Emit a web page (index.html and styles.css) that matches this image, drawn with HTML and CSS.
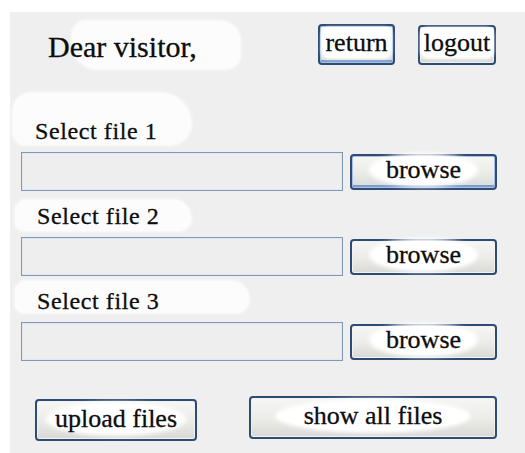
FILE: index.html
```html
<!DOCTYPE html>
<html lang="en">
<head>
<meta charset="utf-8">
<title>Upload files</title>
<link rel="stylesheet" href="styles.css">
</head>
<body>
<div class="panel">
  <div class="header">
    <div class="greeting">Dear visitor,</div>
    <button class="btn btn-return focused"><span class="ink">return</span></button>
    <button class="btn btn-logout"><span class="ink">logout</span></button>
  </div>

  <div class="label label-1">Select file 1</div>
  <div class="file-row">
    <div class="field"></div>
    <button class="btn btn-browse focused"><span class="ink">browse</span></button>
  </div>

  <div class="label label-2">Select file 2</div>
  <div class="file-row">
    <div class="field"></div>
    <button class="btn btn-browse"><span class="ink">browse</span></button>
  </div>

  <div class="label label-3">Select file 3</div>
  <div class="file-row">
    <div class="field"></div>
    <button class="btn btn-browse"><span class="ink">browse</span></button>
  </div>

  <div class="actions">
    <button class="btn btn-upload"><span class="ink">upload files</span></button>
    <button class="btn btn-show"><span class="ink">show all files</span></button>
  </div>
</div>
</body>
</html>
```

FILE: styles.css
```css
html, body {
  margin: 0;
  padding: 0;
  background: #ffffff;
}

body {
  font-family: "Liberation Serif", "Times New Roman", serif;
  color: #0d0d0d;
  -webkit-text-stroke: 0.3px #0d0d0d;
}

.panel {
  position: relative;
  isolation: isolate;
  box-sizing: border-box;
  width: 515px;
  height: 441px;
  margin: 12px 0 0 10px;
  padding: 12px 28px 0 11px;
  background: #efefef;
}

/* top bar */
.header {
  display: flex;
  align-items: center;
  height: 41px;
}

.greeting {
  position: relative;
  flex: 1;
  margin-left: 27px;
  margin-top: 4px;
  font-size: 30px;
  line-height: 34px;
}

.greeting::before {
  content: "";
  position: absolute;
  z-index: -1;
  left: 24px;
  top: -9px;
  width: 168px;
  height: 48px;
  background: #fcfcfc;
  border-radius: 14px 20px 14px 26px;
  box-shadow: 0 0 3px 1px #fcfcfc;
}

/* buttons */
.btn {
  display: flex;
  align-items: center;
  justify-content: center;
  box-sizing: border-box;
  padding: 0 0 3px;
  margin: 0;
  font-family: inherit;
  font-size: 26px;
  color: #0d0d0d;
  border: 2px solid #2e4b73;
  border-radius: 4px;
  background: linear-gradient(180deg, #f6f6f4 0%, #ebebe8 55%, #d8d8d4 100%);
  box-shadow: inset 0 0 0 1px #f2f2f2;
}

.btn.focused {
  box-shadow: inset 0 0 0 1px #a9c0e4, inset 0 -2px 0 1px #7d9dd2;
}

.ink {
  display: inline-block;
  line-height: 28px;
  padding: 0 9px;
  background: #ffffff;
  border-radius: 50%;
  box-shadow: 0 0 4px 3px #ffffff;
}

.btn-return {
  width: 77px;
  height: 41px;
  margin-right: 23px;
}

.btn-return .ink,
.btn-logout .ink {
  padding: 0 2px;
  border-radius: 6px;
  box-shadow: 0 0 3px 2px #ffffff;
}

.btn-logout {
  width: 78px;
  height: 40px;
  margin-right: 1px;
}

/* file pickers */
.label {
  position: relative;
  font-size: 24px;
  line-height: 28px;
  letter-spacing: 0.6px;
  margin-top: 11px;
  margin-bottom: 7px;
  padding-left: 16px;
}

.label::before {
  content: "";
  position: absolute;
  z-index: -1;
  left: -6px;
  top: -2px;
  width: 176px;
  height: 31px;
  background: #fcfcfc;
  border-radius: 16px 26px 18px 14px;
  box-shadow: 0 0 3px 1px #fcfcfc;
}

.label-1 {
  margin-top: 52px;
  padding-left: 14px;
}

.label-1::before {
  left: -8px;
  top: -24px;
  height: 52px;
  width: 178px;
  border-radius: 24px 40px 28px 16px;
}

.label-3::before {
  top: -6px;
  width: 234px;
  height: 32px;
}

.file-row {
  display: flex;
  align-items: center;
  height: 39px;
}

.field {
  box-sizing: border-box;
  width: 322px;
  height: 39px;
  margin-right: 7px;
  border: 1px solid #7f98b8;
  background: #eeeeee;
  box-shadow: inset 0 0 0 1px #e4e8ee;
}

.btn-browse {
  width: 147px;
  height: 36px;
}

.btn-browse .ink {
  padding: 0 14px;
}

/* bottom actions */
.actions {
  display: flex;
  align-items: flex-start;
  margin-top: 35px;
  padding-left: 14px;
}

.btn-upload {
  width: 162px;
  height: 42px;
  margin-top: 3px;
  margin-right: 52px;
}

.btn-upload .ink {
  padding: 0 6px;
}

.btn-show {
  width: 248px;
  height: 43px;
}

.btn-show .ink {
  padding: 0 26px;
}
```
